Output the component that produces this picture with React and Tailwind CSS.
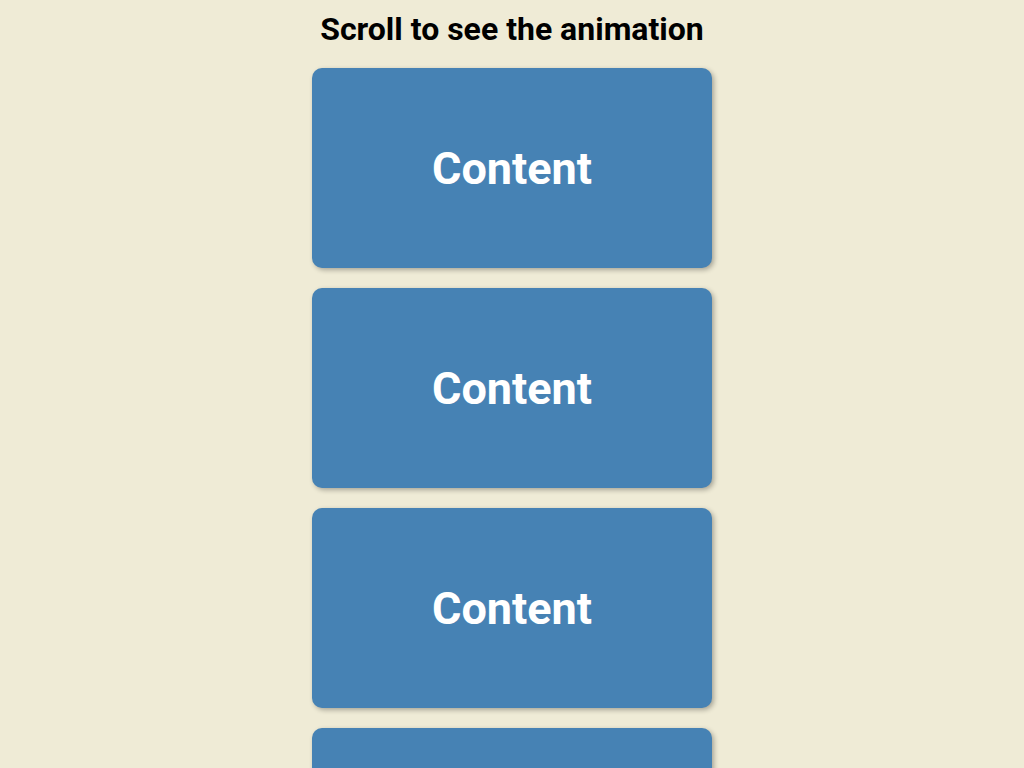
export default function App() {
  const cards = [0, 1, 2, 3, 4];
  return (
    <div className="min-h-screen bg-[#efebd6] flex flex-col items-center font-['Roboto',sans-serif]">
      <h1 className="text-[32px] font-bold text-black leading-[38px] mt-[10px] mb-[20px]">Scroll to see the animation</h1>
      <div className="flex flex-col gap-5">
        {cards.map((i) => (
          <div key={i} className="w-[400px] h-[200px] bg-[#4682b4] rounded-[10px] shadow-[2px_2px_5px_rgba(0,0,0,0.3)] flex items-center justify-center">
            <span className="text-white font-bold text-[45px] leading-[52px] mt-[2px]">Content</span>
          </div>
        ))}
      </div>
    </div>
  );
}
